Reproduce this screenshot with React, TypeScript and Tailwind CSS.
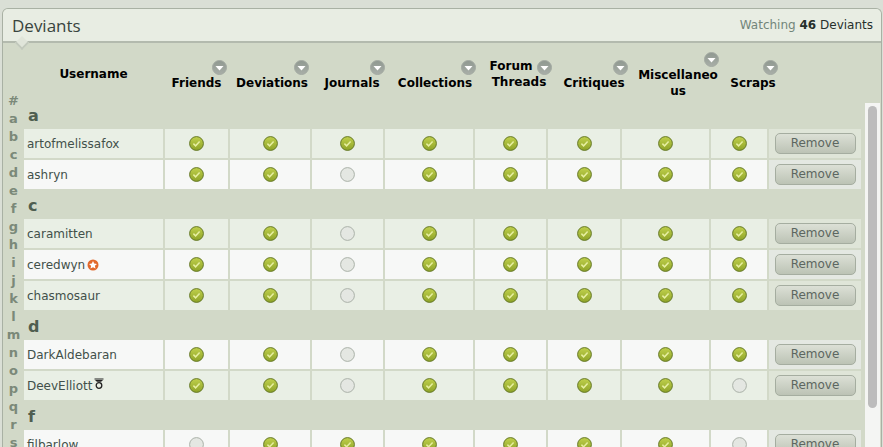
const letters = "#abcdefghijklmnopqrs".split("");

const headers = [
  { label: ["Friends"], w: "w-[63px]", pt: "pt-[32px]", icon: "left-[47px] top-[17px]", first: "" },
  { label: ["Deviations"], w: "w-[84px]", pt: "pt-[32px]", icon: "left-[64px] top-[17px]", first: "" },
  { label: ["Journals"], w: "w-[72px]", pt: "pt-[32px]", icon: "left-[54px] top-[17px]", first: "" },
  { label: ["Collections"], w: "w-[90px]", pt: "pt-[32px]", icon: "left-[71px] top-[17px]", first: "" },
  { label: ["Forum", "Threads"], w: "w-[74px]", pt: "pt-[15px]", icon: "left-[55px] top-[17px]", first: "pr-[16px]" },
  { label: ["Critiques"], w: "w-[72px]", pt: "pt-[32px]", icon: "left-[55px] top-[17px]", first: "" },
  { label: ["Miscellaneo", "us"], w: "w-[92px]", pt: "pt-[24px]", icon: "left-[72px] top-[9px]", first: "" },
  { label: ["Scraps"], w: "w-[54px]", pt: "pt-[32px]", icon: "left-[37px] top-[17px]", first: "" },
];

const colWidths = ["w-[63px]", "w-[80px]", "w-[71px]", "w-[88px]", "w-[71px]", "w-[72px]", "w-[87px]", "w-[56px]"];

type Row = { name: string; badge?: "star" | "medal"; off?: number[] };
const sections: { letter: string; rows: Row[] }[] = [
  { letter: "a", rows: [{ name: "artofmelissafox" }, { name: "ashryn", off: [2] }] },
  {
    letter: "c",
    rows: [
      { name: "caramitten", off: [2] },
      { name: "ceredwyn", badge: "star", off: [2] },
      { name: "chasmosaur", off: [2] },
    ],
  },
  {
    letter: "d",
    rows: [
      { name: "DarkAldebaran", off: [2] },
      { name: "DeevElliott", badge: "medal", off: [2, 7] },
    ],
  },
  { letter: "f", rows: [{ name: "filbarlow", off: [0, 7] }] },
];

function Arrow() {
  return (
    <svg width="15" height="15" viewBox="0 0 15 15">
      <defs>
        <linearGradient id="arrowBg" x1="0" y1="0" x2="0" y2="1">
          <stop offset="0" stopColor="#8f9890" />
          <stop offset="1" stopColor="#a9afa8" />
        </linearGradient>
      </defs>
      <circle cx="7.5" cy="7.5" r="7" fill="url(#arrowBg)" stroke="#a3aaa2" />
      <path d="M3.5 6h8l-4 4.5z" fill="#fff" />
    </svg>
  );
}

function Check({ on }: { on: boolean }) {
  if (!on) {
    return (
      <svg width="15" height="15" viewBox="0 0 15 15">
        <circle cx="7.5" cy="7.5" r="6.9" fill="#e4e7e2" stroke="#aab1a8" />
      </svg>
    );
  }
  return (
    <svg width="15" height="15" viewBox="0 0 15 15">
      <defs>
        <linearGradient id="checkBg" x1="0" y1="0" x2="0" y2="1">
          <stop offset="0" stopColor="#c0d04c" />
          <stop offset="1" stopColor="#8ea328" />
        </linearGradient>
      </defs>
      <circle cx="7.5" cy="7.5" r="6.9" fill="url(#checkBg)" stroke="#66792a" />
      <path d="M4.4 7.6l2.200 2.200 4-4.400" fill="none" stroke="#e6eea0" strokeWidth="1.5" />
    </svg>
  );
}

function Star() {
  return (
    <svg width="12" height="12" viewBox="0 0 12 12" className="ml-[2px] shrink-0">
      <circle cx="6" cy="6" r="5.5" fill="#e2692b" />
      <path d="M6 2l1.200 2.600 2.800.3-2.100 1.900.6 2.800L6 8.200 3.500 9.600l.6-2.800L2 4.900l2.800-.3z" fill="#fff" />
    </svg>
  );
}

function Medal() {
  return (
    <svg width="10" height="12" viewBox="0 0 10 12" className="ml-[2px] -mt-[3px] shrink-0">
      <path d="M0.500 1h9M1.500 2.500h7" stroke="#222" strokeWidth="1" />
      <path d="M2.500 3.500h5" stroke="#555" strokeWidth="1" />
      <circle cx="5" cy="7.500" r="2.800" fill="none" stroke="#222" strokeWidth="1.300" />
    </svg>
  );
}

export default function App() {
  let rowIndex = 0;

  return (
    <div className="h-[447px] w-[883px] overflow-hidden bg-[#dadfd6] pt-[8px] pl-[2px] font-['DejaVu_Sans',sans-serif]">
      <div className="h-[439px] w-[880px] overflow-hidden rounded-t-[6px] border-x border-t border-[#a9b1a4] bg-[#d2d9c8]">
        <div className="relative flex h-[34px] items-center justify-between border-b-2 border-[#b3baae] bg-[#e8ede3] pl-[9px] pr-[8px]">
          <h1 className="font-['Open_Sans',sans-serif] text-[17px] leading-none text-[#38443e]">Deviants</h1>
          <div className="text-[12px] text-[#26302c]">
            <span className="text-[#72857a]">Watching</span> <b>46</b> Deviants
          </div>
          <span className="absolute -bottom-[7px] left-[14px] h-[10px] w-[10px] rotate-45 border-r-2 border-b-2 border-[#c2c9bc] bg-[#e0e5da]" />
        </div>

        <div className="flex">
          <ul className="w-[21px] shrink-0 pt-[49px] text-center text-[13px] leading-[18px] font-bold text-[#7b8979]">
            {letters.map((l) => (
              <li key={l}>{l}</li>
            ))}
          </ul>

          <div className="min-w-0 flex-1">
            <div className="flex h-[58px] gap-[2px] text-[12px] leading-[16px] font-bold text-black">
              <div className="w-[139px] pt-[23px] text-center">Username</div>
              {headers.map((h) => (
                <div key={h.label[0]} className={`relative shrink-0 text-center ${h.w} ${h.pt}`}>
                  {h.label.map((line, i) => (
                    <div key={line} className={`whitespace-nowrap ${i === 0 ? h.first : ""}`}>
                      {line}
                    </div>
                  ))}
                  <span className={`absolute ${h.icon}`}>
                    <Arrow />
                  </span>
                </div>
              ))}
            </div>

            <div className="flex">
              <div className="flex h-[346px] w-[839px] shrink-0 flex-col gap-[2px] overflow-hidden">
                {sections.map((s) => (
                  <div key={s.letter} className="flex flex-col gap-[2px]">
                    <div className="flex h-[26px] items-end pl-[4px] text-[16px] leading-[22px] font-bold text-[#4f5e50]">
                      {s.letter}
                    </div>
                    {s.rows.map((r) => {
                      const tint = rowIndex++ % 2 === 0;
                      const bg = tint ? "bg-[#e9efe5]" : "bg-[#f7f8f7]";
                      return (
                        <div key={r.name} className="flex h-[29px] shrink-0 gap-[2px]">
                          <div className={`flex w-[139px] items-center pl-[3px] text-[12px] text-[#42504a] ${bg}`}>
                            {r.name}
                            {r.badge === "star" && <Star />}
                            {r.badge === "medal" && <Medal />}
                          </div>
                          {colWidths.map((w, i) => (
                            <div key={i} className={`flex items-center justify-center ${w} ${bg}`}>
                              <Check on={!r.off?.includes(i)} />
                            </div>
                          ))}
                          <div className={`flex w-[92px] items-center justify-center ${tint ? "bg-[#dfe5d8]" : "bg-[#e4e8e2]"}`}>
                            <button className="h-[21px] w-[81px] rounded-[5px] border border-[#a5ada0] bg-gradient-to-b from-[#dce0d6] to-[#bcc3b5] pb-[2px] text-[12px] leading-none text-[#5c6660]">
                              Remove
                            </button>
                          </div>
                        </div>
                      );
                    })}
                  </div>
                ))}
              </div>

              <div className="ml-[2px] mt-[2px] h-[344px] w-[15px] shrink-0 bg-[#f4f5f3] px-[3px] pt-[3px]">
                <div className="h-[302px] w-[9px] rounded-full bg-[#bcbcbc]" />
              </div>
            </div>
          </div>
        </div>
      </div>
    </div>
  );
}
